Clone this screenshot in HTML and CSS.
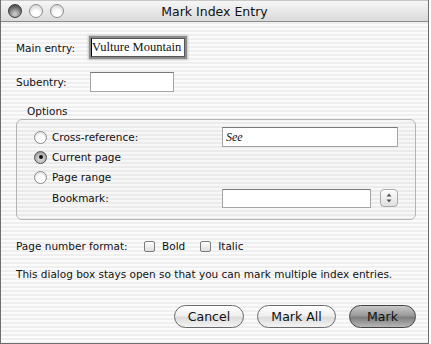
FILE: index.html
```html
<!DOCTYPE html>
<html lang="en" dir="ltr">
<head>
  <meta charset="UTF-8">
  <title>Mark Index Entry</title>
  <link rel="stylesheet" href="styles.css">
</head>
<body>
  <div class="window">
    <div class="titlebar">
      <div class="lights">
        <span class="light close"></span>
        <span class="light"></span>
        <span class="light"></span>
      </div>
      <div class="title">Mark Index Entry</div>
    </div>

    <div class="content">
      <div class="row entry-row">
        <label class="label">Main entry:</label>
        <div class="field focused">Vulture Mountain</div>
      </div>
      <div class="row sub-row">
        <label class="label">Subentry:</label>
        <div class="field sub"></div>
      </div>

      <div class="group-title">Options</div>
      <div class="group">
        <div class="opt">
          <span class="radio"></span><span>Cross-reference:</span>
          <div class="field see"><i>See</i></div>
        </div>
        <div class="opt">
          <span class="radio on"></span><span>Current page</span>
        </div>
        <div class="opt">
          <span class="radio"></span><span>Page range</span>
        </div>
        <div class="opt bookmark">
          <span class="bm-label">Bookmark:</span>
          <div class="field bm"></div>
          <div class="stepper">
            <svg width="6" height="10" viewBox="0 0 6 10"><path d="M3 0.5 L5.5 3.5 H0.5 Z M3 9.5 L5.5 6.5 H0.5 Z" fill="#555"/></svg>
          </div>
        </div>
      </div>

      <div class="row format-row">
        <span class="fmt-label">Page number format:</span>
        <span class="check"></span><span class="chk-text">Bold</span>
        <span class="check"></span><span class="chk-text">Italic</span>
      </div>

      <p class="info">This dialog box stays open so that you can mark multiple index entries.</p>

      <div class="buttons">
        <button class="btn">Cancel</button>
        <button class="btn">Mark All</button>
        <button class="btn default">Mark</button>
      </div>
    </div>
  </div>
</body>
</html>
```

FILE: styles.css
```css
body {
  margin: 0;
  background: #fff;
  font-family: 'DejaVu Sans', Verdana, sans-serif;
  font-size: 10.5px;
  color: #111;
}
.window {
  width: 429px;
  height: 344px;
  box-sizing: border-box;
  border: 1px solid #6e6e6e;
  border-top: none;
  background: repeating-linear-gradient(#fbfbfb 0 2px, #efefef 2px 4px);
}
.titlebar {
  height: 22px;
  box-sizing: border-box;
  border-top: 1px solid #c8c8c8;
  border-bottom: 1px solid #8c8c8c;
  background: linear-gradient(#f6f6f6, #dadada);
  display: flex;
  align-items: center;
}
.lights {
  display: flex;
  gap: 7px;
  padding-left: 7px;
}
.light {
  flex-shrink: 0;
  width: 14px;
  height: 14px;
  border-radius: 50%;
  box-sizing: border-box;
  border: 1px solid #8e8e8e;
  background: radial-gradient(circle at 50% 72%, #ffffff 0 30%, #cfcfcf 90%);
}
.light.close {
  border-color: #3c3c3c;
  background: radial-gradient(circle at 50% 75%, #c4c4c4 0 12%, #555 75%);
}
.title {
  flex: 1;
  text-align: center;
  font-size: 12.5px;
  color: #111;
  margin-right: 63px;
}
.content {
  padding: 0 12px 0 15px;
}
.row {
  display: flex;
  align-items: center;
}
.label {
  width: 73px;
}
.entry-row {
  margin-top: 14px;
  height: 23px;
}
.field {
  box-sizing: border-box;
  background: #fff;
  border: 1px solid #a4a4a4;
  border-top-color: #7a7a7a;
  height: 20px;
}
.field.focused {
  width: 94px;
  height: 19px;
  margin-left: 2px;
  font-family: 'Liberation Serif', serif;
  font-size: 12.5px;
  line-height: 17px;
  padding-left: 0;
  white-space: nowrap;
  overflow: hidden;
  border-color: #555;
  box-shadow: 0 0 0 2px #8a8a8a, 0 0 2px 3px #c4c4c4;
  border-left: 1px solid #000;
}
.sub-row {
  margin-top: 13px;
  height: 20px;
}
.field.sub {
  width: 84px;
  margin-left: 1px;
}
.group-title {
  margin-top: 13px;
  padding-left: 11px;
  height: 13px;
  line-height: 13px;
}
.group {
  margin-top: 1px;
  width: 400px;
  height: 101px;
  box-sizing: border-box;
  border: 1px solid #b4b4b4;
  border-radius: 6px;
  padding: 7px 0 0 17px;
  background: rgba(0, 0, 0, 0.015);
}
.opt {
  display: flex;
  align-items: center;
  height: 20px;
}
.radio {
  flex-shrink: 0;
  width: 13px;
  height: 13px;
  box-sizing: border-box;
  border-radius: 50%;
  border: 1px solid #8a8a8a;
  background: radial-gradient(circle at 50% 70%, #fff 0 40%, #dcdcdc 90%);
  margin-right: 5px;
  display: flex;
  align-items: center;
  justify-content: center;
}
.radio.on {
  border-color: #555;
  background: radial-gradient(circle at 50% 60%, #d0d0d0 0 30%, #8a8a8a 90%);
}
.radio.on::after {
  content: "";
  width: 4px;
  height: 4px;
  border-radius: 50%;
  background: #111;
}
.field.see {
  width: 176px;
  margin-left: auto;
  margin-right: 17px;
  font-family: 'Liberation Serif', serif;
  font-size: 12px;
  line-height: 18px;
  padding-left: 3px;
}
.bookmark {
  margin-top: 1px;
}
.bm-label {
  width: 188px;
  padding-left: 18px;
  box-sizing: border-box;
}
.field.bm {
  width: 149px;
  height: 19px;
}
.stepper {
  width: 18px;
  height: 18px;
  margin-left: 9px;
  box-sizing: border-box;
  border: 1px solid #aaa;
  border-radius: 4px;
  background: linear-gradient(#fdfdfd, #e0e0e0);
  display: flex;
  align-items: center;
  justify-content: center;
}
.format-row {
  margin-top: 16px;
  height: 20px;
}
.fmt-label {
  width: 128px;
}
.check {
  flex-shrink: 0;
  width: 11px;
  height: 11px;
  box-sizing: border-box;
  border: 1px solid #7c7c7c;
  border-radius: 2px;
  background: linear-gradient(#fff, #dedede);
  margin-right: 7px;
}
.chk-text {
  margin-right: 15px;
}
.info {
  margin: 11px 0 0;
  height: 14px;
  line-height: 14px;
  white-space: nowrap;
}
.buttons {
  margin-top: 24px;
  display: flex;
  justify-content: flex-end;
  gap: 13px;
}
.btn {
  height: 23px;
  border-radius: 12px;
  border: 1px solid #6a6a6a;
  background: linear-gradient(#ffffff 0%, #f0f0f0 45%, #dcdcdc 55%, #f4f4f4 100%);
  font-family: 'DejaVu Sans', Verdana, sans-serif;
  font-size: 12.5px;
  color: #111;
  padding: 0;
  white-space: nowrap;
}
.btn:nth-child(1) { width: 70px; }
.btn:nth-child(2) { width: 79px; }
.btn.default {
  width: 67px;
  border-color: #444;
  background: linear-gradient(#c9c9c9 0%, #9a9a9a 45%, #7e7e7e 55%, #b8b8b8 100%);
}
```
